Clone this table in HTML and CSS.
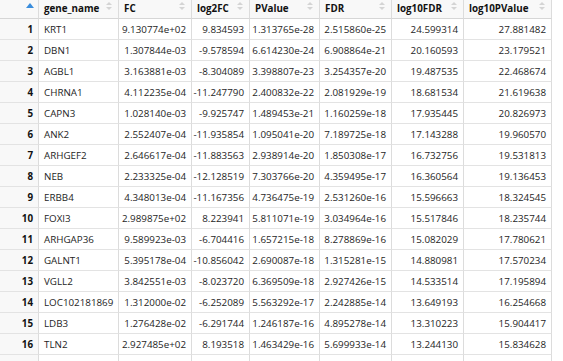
FILE: index.html
```html
<!DOCTYPE html>
<html>
<head>
<meta charset="utf-8">
<link rel="stylesheet" href="styles.css">
</head>
<body>
<div class="viewer">
  <div class="grid">
    <div class="hd rn"><svg class="sort-active" width="8" height="5" viewBox="0 0 8 5"><path d="M0 5 L4 0 L8 5 Z" fill="#3a8ddc"/></svg></div>
    <div class="hd">gene_name<span class="arrows"></span></div>
    <div class="hd">FC<span class="arrows"></span></div>
    <div class="hd">log2FC<span class="arrows"></span></div>
    <div class="hd">PValue<span class="arrows"></span></div>
    <div class="hd">FDR<span class="arrows"></span></div>
    <div class="hd">log10FDR<span class="arrows"></span></div>
    <div class="hd">log10PValue<span class="arrows"></span></div>

    <div class="rn">1</div><div class="tx">KRT1</div><div class="nm">9.130774e+02</div><div class="nm">9.834593</div><div class="nm">1.313765e-28</div><div class="nm">2.515860e-25</div><div class="nm">24.599314</div><div class="nm">27.881482</div>
    <div class="rn">2</div><div class="tx">DBN1</div><div class="nm">1.307844e-03</div><div class="nm">-9.578594</div><div class="nm">6.614230e-24</div><div class="nm">6.908864e-21</div><div class="nm">20.160593</div><div class="nm">23.179521</div>
    <div class="rn">3</div><div class="tx">AGBL1</div><div class="nm">3.163881e-03</div><div class="nm">-8.304089</div><div class="nm">3.398807e-23</div><div class="nm">3.254357e-20</div><div class="nm">19.487535</div><div class="nm">22.468674</div>
    <div class="rn">4</div><div class="tx">CHRNA1</div><div class="nm">4.112235e-04</div><div class="nm">-11.247790</div><div class="nm">2.400832e-22</div><div class="nm">2.081929e-19</div><div class="nm">18.681534</div><div class="nm">21.619638</div>
    <div class="rn">5</div><div class="tx">CAPN3</div><div class="nm">1.028140e-03</div><div class="nm">-9.925747</div><div class="nm">1.489453e-21</div><div class="nm">1.160259e-18</div><div class="nm">17.935445</div><div class="nm">20.826973</div>
    <div class="rn">6</div><div class="tx">ANK2</div><div class="nm">2.552407e-04</div><div class="nm">-11.935854</div><div class="nm">1.095041e-20</div><div class="nm">7.189725e-18</div><div class="nm">17.143288</div><div class="nm">19.960570</div>
    <div class="rn">7</div><div class="tx">ARHGEF2</div><div class="nm">2.646617e-04</div><div class="nm">-11.883563</div><div class="nm">2.938914e-20</div><div class="nm">1.850308e-17</div><div class="nm">16.732756</div><div class="nm">19.531813</div>
    <div class="rn">8</div><div class="tx">NEB</div><div class="nm">2.233325e-04</div><div class="nm">-12.128519</div><div class="nm">7.303766e-20</div><div class="nm">4.359495e-17</div><div class="nm">16.360564</div><div class="nm">19.136453</div>
    <div class="rn">9</div><div class="tx">ERBB4</div><div class="nm">4.348013e-04</div><div class="nm">-11.167356</div><div class="nm">4.736475e-19</div><div class="nm">2.531260e-16</div><div class="nm">15.596663</div><div class="nm">18.324545</div>
    <div class="rn">10</div><div class="tx">FOXI3</div><div class="nm">2.989875e+02</div><div class="nm">8.223941</div><div class="nm">5.811071e-19</div><div class="nm">3.034964e-16</div><div class="nm">15.517846</div><div class="nm">18.235744</div>
    <div class="rn">11</div><div class="tx">ARHGAP36</div><div class="nm">9.589923e-03</div><div class="nm">-6.704416</div><div class="nm">1.657215e-18</div><div class="nm">8.278869e-16</div><div class="nm">15.082029</div><div class="nm">17.780621</div>
    <div class="rn">12</div><div class="tx">GALNT1</div><div class="nm">5.395178e-04</div><div class="nm">-10.856042</div><div class="nm">2.690087e-18</div><div class="nm">1.315281e-15</div><div class="nm">14.880981</div><div class="nm">17.570234</div>
    <div class="rn">13</div><div class="tx">VGLL2</div><div class="nm">3.842551e-03</div><div class="nm">-8.023720</div><div class="nm">6.369509e-18</div><div class="nm">2.927426e-15</div><div class="nm">14.533514</div><div class="nm">17.195894</div>
    <div class="rn">14</div><div class="tx">LOC102181869</div><div class="nm">1.312000e-02</div><div class="nm">-6.252089</div><div class="nm">5.563292e-17</div><div class="nm">2.242885e-14</div><div class="nm">13.649193</div><div class="nm">16.254668</div>
    <div class="rn">15</div><div class="tx">LDB3</div><div class="nm">1.276428e-02</div><div class="nm">-6.291744</div><div class="nm">1.246187e-16</div><div class="nm">4.895278e-14</div><div class="nm">13.310223</div><div class="nm">15.904417</div>
    <div class="rn">16</div><div class="tx">TLN2</div><div class="nm">2.927485e+02</div><div class="nm">8.193518</div><div class="nm">1.463429e-16</div><div class="nm">5.699933e-14</div><div class="nm">13.244130</div><div class="nm">15.834628</div>

    <div class="rn fill"></div><div class="fill"></div><div class="fill"></div><div class="fill"></div><div class="fill"></div><div class="fill"></div><div class="fill"></div><div class="fill"></div>
  </div>
</div>
</body>
</html>
```
FILE: styles.css
```css
html, body {
  margin: 0;
  padding: 0;
  background: #ffffff;
}
.viewer {
  width: 563px;
  height: 361px;
  overflow: hidden;
  font-family: "Open Sans", "Noto Sans", "DejaVu Sans", sans-serif;
  font-size: 9.8px;
  color: #1e1e1e;
}
.grid {
  display: grid;
  grid-template-columns: 39px 80px 73px 58px 70px 72px 72px 88px;
  grid-template-rows: 19px repeat(16, 21px) 20px;
  width: 552px;
}
.grid > div {
  box-sizing: border-box;
  border-right: 1px solid #dcdcdc;
  border-bottom: 1px solid #e3e3e3;
  padding: 0 5px;
  display: flex;
  align-items: center;
  white-space: nowrap;
  overflow: hidden;
}
.grid > .hd {
  position: relative;
  font-weight: 700;
  color: #111;
  background: #f8f8f8;
  padding-left: 5px;
  padding-bottom: 1px;
  border-bottom: 1px solid #d6d6d6;
}
.grid > .rn {
  justify-content: flex-end;
  font-weight: 700;
  color: #111;
  background: #f8f8f8;
  padding-right: 5px;
}
.grid > .hd.rn {
  justify-content: flex-end;
  align-items: flex-start;
  padding-top: 3px;
  padding-right: 4px;
}
.tx {
  justify-content: flex-start;
}
.grid > .nm {
  justify-content: flex-end;
  padding-right: 5px;
}
.grid > .fill {
  border-bottom: none;
}
.arrows {
  position: absolute;
  right: 6px;
  top: 2px;
  width: 6px;
  height: 9px;
}
.arrows::before,
.arrows::after {
  content: "";
  position: absolute;
  left: 0;
  border-left: 3px solid transparent;
  border-right: 3px solid transparent;
}
.arrows::before {
  top: 0;
  border-bottom: 3px solid #d4d4d4;
}
.arrows::after {
  top: 5px;
  border-top: 3px solid #d4d4d4;
}
```
